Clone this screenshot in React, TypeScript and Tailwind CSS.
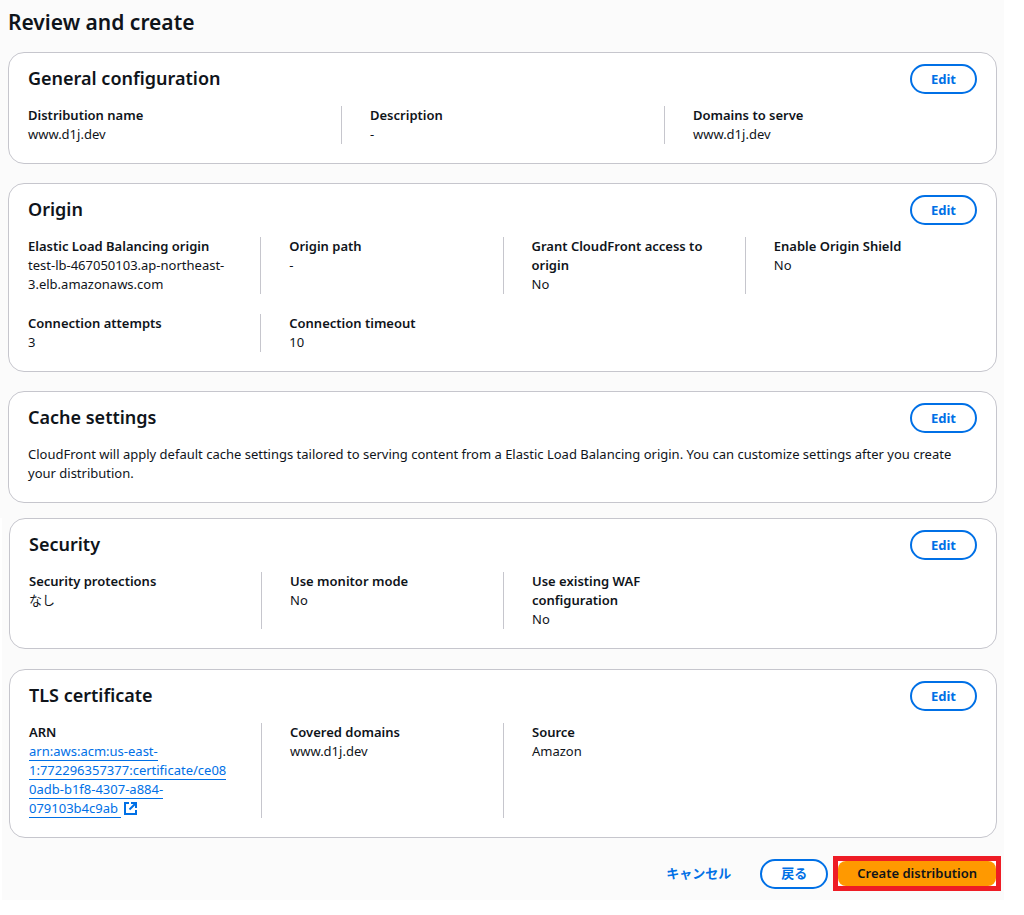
import React from 'react';

type Field = { label: string; value: React.ReactNode };

const GENERAL: Field[] = [
  { label: 'Distribution name', value: 'www.d1j.dev' },
  { label: 'Description', value: '-' },
  { label: 'Domains to serve', value: 'www.d1j.dev' },
];

const ORIGIN: Field[] = [
  { label: 'Elastic Load Balancing origin', value: 'test-lb-467050103.ap-northeast-3.elb.amazonaws.com' },
  { label: 'Origin path', value: '-' },
  { label: 'Grant CloudFront access to origin', value: 'No' },
  { label: 'Enable Origin Shield', value: 'No' },
];

const CONNECTION: Field[] = [
  { label: 'Connection attempts', value: '3' },
  { label: 'Connection timeout', value: '10' },
];

const SECURITY: Field[] = [
  { label: 'Security protections', value: 'なし' },
  { label: 'Use monitor mode', value: 'No' },
  { label: 'Use existing WAF configuration', value: 'No' },
];

const ExternalIcon: React.FC = () => (
  <svg viewBox="0 0 15 15" className="inline-block w-[15px] h-[15px] ml-0.5 align-[-3px]" fill="none" stroke="currentColor" strokeWidth="2" aria-hidden="true">
    <path d="M6 2H2V13H13V9" />
    <path d="M8 2H13V7" />
    <path d="M6.5 8.5L12.5 2.5" />
  </svg>
);

const TLS: Field[] = [
  {
    label: 'ARN',
    value: (
      <a href="#arn" className="text-[#0070e6]">
        <span className="border-b border-[#0070e6]">
          arn:aws:acm:us-east-
          <wbr />
          1:772296357377:certificate/ce08
          <wbr />
          0adb-b1f8-4307-a884-
          <wbr />
          079103b4c9ab{' '}
        </span>
        <ExternalIcon />
      </a>
    ),
  },
  { label: 'Covered domains', value: 'www.d1j.dev' },
  { label: 'Source', value: 'Amazon' },
];

const Button: React.FC<{ children: React.ReactNode }> = ({ children }) => (
  <button type="button" className="h-[30px] px-[19px] rounded-full border-2 border-[#0070e6] bg-white text-[#0070e6] font-bold leading-none">
    {children}
  </button>
);

const Fields: React.FC<{ items: Field[]; cols?: 3 | 4 }> = ({ items, cols = 4 }) => (
  <dl className={`-mx-[10px] grid ${cols === 3 ? 'grid-cols-3' : 'grid-cols-4'}`}>
    {items.map((item) => (
      <div key={item.label} className="min-w-0 pl-7 pr-[26px] border-l border-[#c6c6cd] first:border-l-0 first:pl-[10px]">
        <dt className="font-semibold">{item.label}</dt>
        <dd className="wrap-break-word">{item.value}</dd>
      </div>
    ))}
  </dl>
);

const Card: React.FC<{ title: string; children: React.ReactNode }> = ({ title, children }) => (
  <section className="rounded-2xl border border-[#c6c6cd] bg-white px-[19px] pt-[11px] pb-[19px]">
    <div className="flex items-start justify-between mb-3">
      <h2 className="text-lg leading-7 font-semibold">{title}</h2>
      <Button>Edit</Button>
    </div>
    <div className="flex flex-col gap-5">{children}</div>
  </section>
);

export default function App() {
  return (
    <main className="bg-white pr-5 text-[13px] leading-[19px] text-[#0f141a] font-['Noto_Sans','Noto_Sans_CJK_JP',sans-serif]">
      <div className="bg-[#fbfbfb] pl-2 pr-[7px] pt-2 pb-[15px]">
        <h1 className="text-[21px] leading-7 font-semibold mb-4">Review and create</h1>
        <div className="flex flex-col gap-[19px]">
          <Card title="General configuration">
            <Fields items={GENERAL} cols={3} />
          </Card>
          <Card title="Origin">
            <Fields items={ORIGIN} />
            <Fields items={CONNECTION} />
          </Card>
          <Card title="Cache settings">
            <p>
              CloudFront will apply default cache settings tailored to serving content from a Elastic Load Balancing origin. You can
              customize settings after you create your distribution.
            </p>
          </Card>
        </div>
      </div>

      <div className="bg-[#fbfbfb] border-l-2 border-white pl-[7px] pr-[7px] pb-[9px]">
        <div className="flex flex-col gap-5">
          <Card title="Security">
            <Fields items={SECURITY} />
          </Card>
          <Card title="TLS certificate">
            <Fields items={TLS} />
          </Card>
        </div>

        <div className="mt-[18px] -mr-1 flex items-center justify-end">
          <button type="button" className="mr-[29px] font-bold text-[#0070e6]">キャンセル</button>
          <Button>戻る</Button>
          <div className="ml-[5px] border-[5px] border-[#ee1c25] bg-white">
            <button type="button" className="block h-[25px] px-[19px] rounded-lg bg-[#ff9900] font-semibold text-[#0f141a]">
              Create distribution
            </button>
          </div>
        </div>
      </div>
    </main>
  );
}
